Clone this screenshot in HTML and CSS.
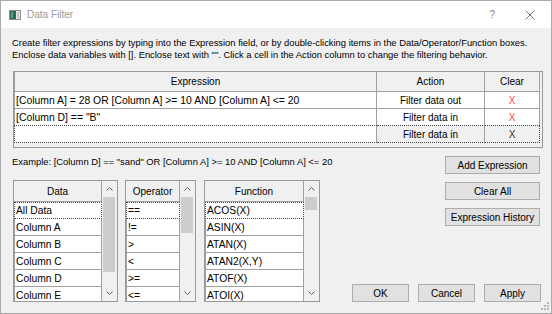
FILE: index.html
```html
<!DOCTYPE html>
<html>
<head>
<meta charset="utf-8">
<title>Data Filter</title>
<link rel="stylesheet" href="styles.css">
</head>
<body>
<div class="window">
  <div class="titlebar">
    <svg class="app-icon" width="12" height="10" viewBox="0 0 12 10">
      <rect x="0.5" y="0.5" width="11" height="9" fill="#e8e8e8" stroke="#8c8c8c"/>
      <rect x="1" y="1" width="6" height="8" fill="#2f6a55"/>
      <rect x="2" y="2" width="2" height="6" fill="#5b9a80"/>
      <rect x="8" y="2" width="2" height="6" fill="#c4c4c4"/>
    </svg>
    <span class="title">Data Filter</span>
    <span class="help">?</span>
    <svg class="close" width="10" height="10" viewBox="0 0 10 10">
      <path d="M0.5 0.5 L9.5 9.5 M9.5 0.5 L0.5 9.5" stroke="#7a7a7a" stroke-width="1" fill="none"/>
    </svg>
  </div>
  <div class="content">
    <p class="intro">Create filter expressions by typing into the Expression field, or by double-clicking items in the Data/Operator/Function boxes.<br>Enclose data variables with []. Enclose text with "". Click a cell in the Action column to change the filtering behavior.</p>
    <div class="expr-table">
      <div class="row head">
        <div class="cell c-expr">Expression</div>
        <div class="cell c-act">Action</div>
        <div class="cell c-clr">Clear</div>
      </div>
      <div class="row">
        <div class="cell c-expr text-start">[Column A] = 28 OR [Column A] &gt;= 10 AND [Column A] &lt;= 20</div>
        <div class="cell c-act">Filter data out</div>
        <div class="cell c-clr red">X</div>
      </div>
      <div class="row">
        <div class="cell c-expr text-start">[Column D] == "B"</div>
        <div class="cell c-act">Filter data in</div>
        <div class="cell c-clr red">X</div>
      </div>
      <div class="row new">
        <div class="cell c-expr text-start"></div>
        <div class="cell c-act grey">Filter data in</div>
        <div class="cell c-clr grey dark">X</div>
      </div>
    </div>
    <div class="lower">
      <div class="lower-left">
        <div class="example">Example: [Column D] == "sand" OR [Column A] &gt;= 10 AND [Column A] &lt;= 20</div>
        <div class="lists">
          <div class="list list-data">
            <div class="items">
              <div class="lhead">Data</div>
              <div class="item focus">All Data</div>
              <div class="item">Column A</div>
              <div class="item">Column B</div>
              <div class="item">Column C</div>
              <div class="item">Column D</div>
              <div class="item">Column E</div>
            </div>
            <div class="scrollbar">
              <svg class="arrow" width="7" height="4" viewBox="0 0 7 4"><path d="M0.5 3.5 L3.5 0.5 L6.5 3.5" stroke="#606060" fill="none"/></svg>
              <div class="track"><div class="thumb thumb-data"></div></div>
              <svg class="arrow" width="7" height="4" viewBox="0 0 7 4"><path d="M0.5 0.5 L3.5 3.5 L6.5 0.5" stroke="#606060" fill="none"/></svg>
            </div>
          </div>
          <div class="list list-op">
            <div class="items">
              <div class="lhead">Operator</div>
              <div class="item focus">==</div>
              <div class="item">!=</div>
              <div class="item">&gt;</div>
              <div class="item">&lt;</div>
              <div class="item">&gt;=</div>
              <div class="item">&lt;=</div>
            </div>
            <div class="scrollbar">
              <svg class="arrow" width="7" height="4" viewBox="0 0 7 4"><path d="M0.5 3.5 L3.5 0.5 L6.5 3.5" stroke="#606060" fill="none"/></svg>
              <div class="track"><div class="thumb thumb-op"></div></div>
              <svg class="arrow" width="7" height="4" viewBox="0 0 7 4"><path d="M0.5 0.5 L3.5 3.5 L6.5 0.5" stroke="#606060" fill="none"/></svg>
            </div>
          </div>
          <div class="list list-fn">
            <div class="items">
              <div class="lhead">Function</div>
              <div class="item focus">ACOS(X)</div>
              <div class="item">ASIN(X)</div>
              <div class="item">ATAN(X)</div>
              <div class="item">ATAN2(X,Y)</div>
              <div class="item">ATOF(X)</div>
              <div class="item">ATOI(X)</div>
            </div>
            <div class="scrollbar">
              <svg class="arrow" width="7" height="4" viewBox="0 0 7 4"><path d="M0.5 3.5 L3.5 0.5 L6.5 3.5" stroke="#606060" fill="none"/></svg>
              <div class="track"><div class="thumb thumb-fn"></div></div>
              <svg class="arrow" width="7" height="4" viewBox="0 0 7 4"><path d="M0.5 0.5 L3.5 3.5 L6.5 0.5" stroke="#606060" fill="none"/></svg>
            </div>
          </div>
        </div>
      </div>
      <div class="lower-right">
        <div class="side-buttons">
          <button class="btn side">Add Expression</button>
          <button class="btn side">Clear All</button>
          <button class="btn side">Expression History</button>
        </div>
        <div class="dialog-buttons">
          <button class="btn dlg">OK</button>
          <button class="btn dlg">Cancel</button>
          <button class="btn dlg">Apply</button>
        </div>
      </div>
    </div>
  </div>
  <svg class="grip" width="9" height="9" viewBox="0 0 9 9">
    <rect x="6" y="0" width="2" height="2" fill="#b8b8b8"/>
    <rect x="3" y="3" width="2" height="2" fill="#b8b8b8"/>
    <rect x="6" y="3" width="2" height="2" fill="#b8b8b8"/>
    <rect x="0" y="6" width="2" height="2" fill="#b8b8b8"/>
    <rect x="3" y="6" width="2" height="2" fill="#b8b8b8"/>
    <rect x="6" y="6" width="2" height="2" fill="#b8b8b8"/>
  </svg>
</div>
</body>
</html>
```

FILE: styles.css
```css
body {
  margin: 0;
  background: #ffffff;
}

.window {
  width: 552px;
  height: 314px;
  box-sizing: border-box;
  border: 1px solid #aaaaaa;
  background: #f0f0f0;
  font-family: "Liberation Sans", Arial, sans-serif;
  font-size: 10px;
  color: #000;
  display: flex;
  flex-direction: column;
  position: relative;
}

.titlebar {
  height: 27px;
  flex: none;
  background: #ffffff;
  display: flex;
  align-items: center;
  padding: 0 16px 0 8px;
}

.app-icon {
  margin-right: 6px;
}

.title {
  flex: 1;
  color: #9a9a9a;
  font-size: 10px;
}

.help {
  color: #8a8a8a;
  font-size: 10px;
  margin-right: 30px;
}

.content {
  flex: 1;
  display: flex;
  flex-direction: column;
  padding: 9px 10px 0 11px;
}

.intro {
  margin: 0;
  line-height: 12px;
  font-size: 9.4px;
  white-space: nowrap;
}

.expr-table {
  margin: 10px 0 0 1px;
  width: 530px;
  height: 77px;
  box-sizing: border-box;
  border: 1px solid #9a9a9a;
  background: #f0f0f0;
  display: flex;
  flex-direction: column;
}

.row {
  display: grid;
  grid-template-columns: 363px 108px 55px;
  height: 17px;
  box-sizing: border-box;
}

.row.head {
  height: 20px;
  background: #f0f0f0;
}

.cell {
  box-sizing: border-box;
  border-right: 1px solid #a0a0a0;
  border-bottom: 1px solid #a0a0a0;
  background: #ffffff;
  display: flex;
  align-items: center;
  justify-content: center;
  white-space: nowrap;
  overflow: hidden;
}

.row.head .cell {
  background: #f0f0f0;
}

.cell.c-expr {
  border-left: 1px solid #a0a0a0;
}

.cell.text-start {
  justify-content: flex-start;
  padding-left: 1px;
  font-size: 10.4px;
}

.cell.red {
  color: #ff4d4d;
}

.cell.grey {
  background: #f0f0f0;
}

.cell.dark {
  color: #333;
}

.row.new .cell {
  border-top: 1px dotted #444;
  border-bottom: 1px dotted #444;
}

.row.new {
  margin-top: -1px;
  height: 18px;
}

.row.new .cell.c-expr {
  border-left: 1px dotted #444;
}

.row.new .cell.c-clr {
  border-right: 1px dotted #444;
}

.lower {
  margin-top: 8px;
  height: 146px;
  display: flex;
  justify-content: space-between;
}

.lower-left {
  display: flex;
  flex-direction: column;
}

.example {
  line-height: 12px;
  font-size: 9.4px;
  white-space: nowrap;
}

.lists {
  margin-top: 12px;
  margin-left: 1px;
  display: flex;
}

.list {
  height: 122px;
  box-sizing: border-box;
  border: 1px solid #9a9a9a;
  display: flex;
  background: #f0f0f0;
}

.list-data { width: 105px; }
.list-op { width: 71px; margin-left: 7px; }
.list-fn { width: 116px; margin-left: 8px; }

.items {
  flex: 1;
  display: flex;
  flex-direction: column;
  overflow: hidden;
}

.lhead {
  height: 21px;
  flex: none;
  box-sizing: border-box;
  border-bottom: 1px solid #a0a0a0;
  border-right: 1px solid #a0a0a0;
  display: flex;
  align-items: center;
  justify-content: center;
  background: #f0f0f0;
}

.item {
  height: 17px;
  flex: none;
  box-sizing: border-box;
  background: #ffffff;
  border-left: 1px solid #a0a0a0;
  border-right: 1px solid #a0a0a0;
  border-bottom: 1px solid #a0a0a0;
  padding-left: 1px;
  display: flex;
  align-items: center;
  white-space: nowrap;
  font-size: 10.3px;
}

.item.focus {
  border: 1px dotted #444;
}

.scrollbar {
  width: 15px;
  flex: none;
  display: flex;
  flex-direction: column;
  align-items: center;
}

.arrow {
  flex: none;
  margin: 6px 0;
}

.track {
  flex: 1;
  align-self: stretch;
  padding: 0 2px 0 1px;
}

.thumb {
  background: #cdcdcd;
}

.thumb-data { height: 75px; }
.thumb-op { height: 36px; }
.thumb-fn { height: 13px; }

.lower-right {
  width: 189px;
  display: flex;
  flex-direction: column;
  justify-content: space-between;
  align-items: flex-end;
}

.side-buttons {
  display: flex;
  flex-direction: column;
  gap: 8px;
  margin-right: 1px;
}

.btn {
  font-family: "Liberation Sans", Arial, sans-serif;
  font-size: 10px;
  color: #000;
  background: #e1e1e1;
  border: 1px solid #adadad;
  height: 18px;
  padding: 0;
  margin: 0;
}

.btn.side {
  width: 95px;
}

.dialog-buttons {
  display: flex;
  gap: 9px;
}

.btn.dlg {
  width: 57px;
}

.grip {
  position: absolute;
  right: 1px;
  bottom: 2px;
}
```
